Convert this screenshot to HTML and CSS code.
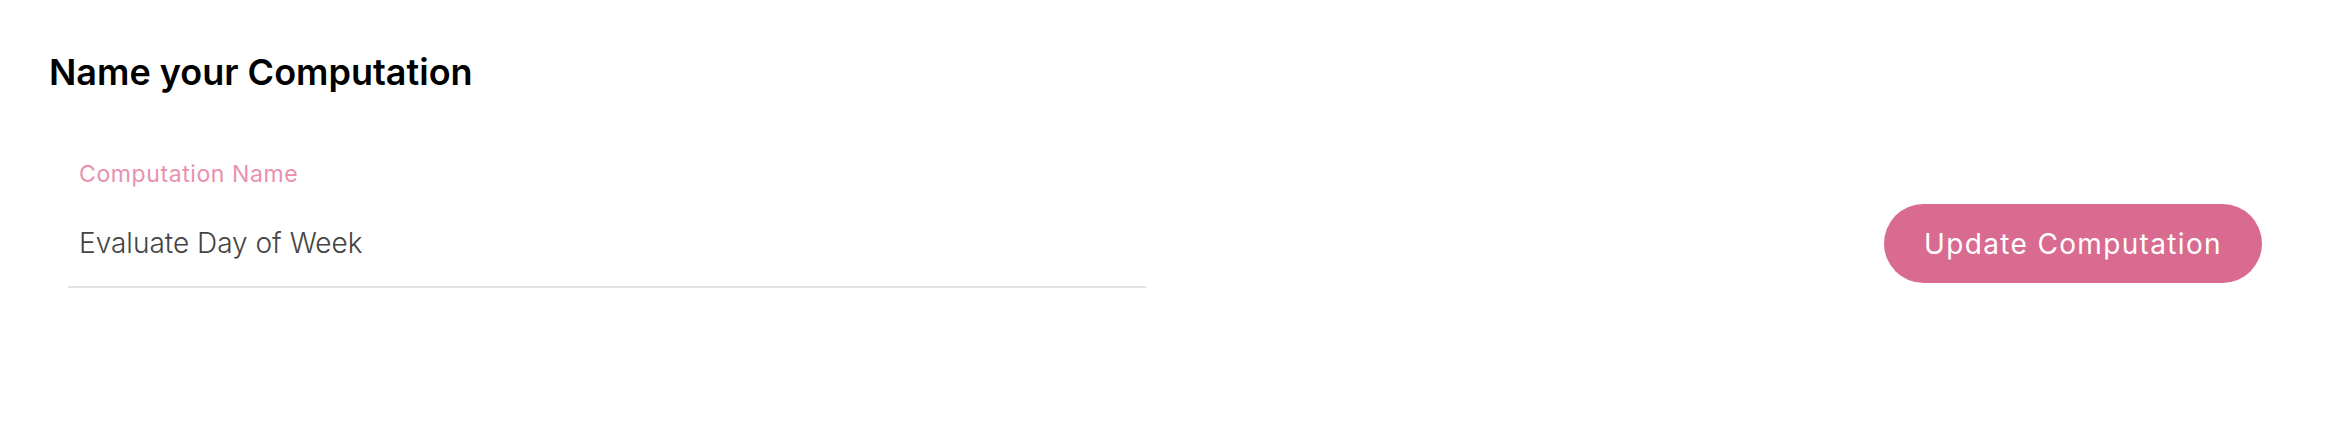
FILE: index.html
```html
<!DOCTYPE html>
<html lang="en">
<head>
  <meta charset="UTF-8" />
  <meta name="viewport" content="width=device-width, initial-scale=1" />
  <title>Name your Computation</title>
  <link rel="stylesheet" href="styles.css">
</head>
<body>
  <div class="page">
    <h1>Name your Computation</h1>

    <form class="name-form">
      <div class="field">
        <label for="compName">Computation Name</label>
        <input type="text" id="compName" value="Evaluate Day of Week" />
      </div>
      <button type="submit" class="update-btn">Update Computation</button>
    </form>
  </div>
</body>
</html>
```

FILE: styles.css
```css
body {
  margin: 0;
  background: #fff;
  font-family: Inter, 'Noto Sans', sans-serif;
  color: #000;
}
.page {
  padding: 50px 84px 0 49px;
}
h1 {
  margin: 0;
  font-size: 36px;
  line-height: 44px;
  font-weight: 600;
}
.name-form {
  display: flex;
  justify-content: space-between;
  align-items: flex-start;
  margin-top: 66px;
}
.field {
  flex: 0 0 1078px;
  margin-left: 19px;
  border-bottom: 2px solid #e2e2e2;
  padding: 0 11px 25px;
  box-sizing: border-box;
  display: flex;
  flex-direction: column;
}
.field label {
  font-size: 23px;
  line-height: 28px;
  letter-spacing: 0.6px;
  color: #e891ad;
  margin-bottom: 37px;
}
.field input {
  font-family: inherit;
  font-size: 28px;
  line-height: 36px;
  height: 36px;
  font-weight: 300;
  color: #444;
  border: none;
  outline: none;
  padding: 0;
  margin: 0;
  background: transparent;
}
.update-btn {
  margin-top: 44px;
  height: 79px;
  padding: 0 40px;
  border: none;
  border-radius: 40px;
  background: #d86b8f;
  color: #fff;
  font-family: inherit;
  font-size: 28px;
  font-weight: 400;
  letter-spacing: 1.35px;
  cursor: pointer;
}
```
